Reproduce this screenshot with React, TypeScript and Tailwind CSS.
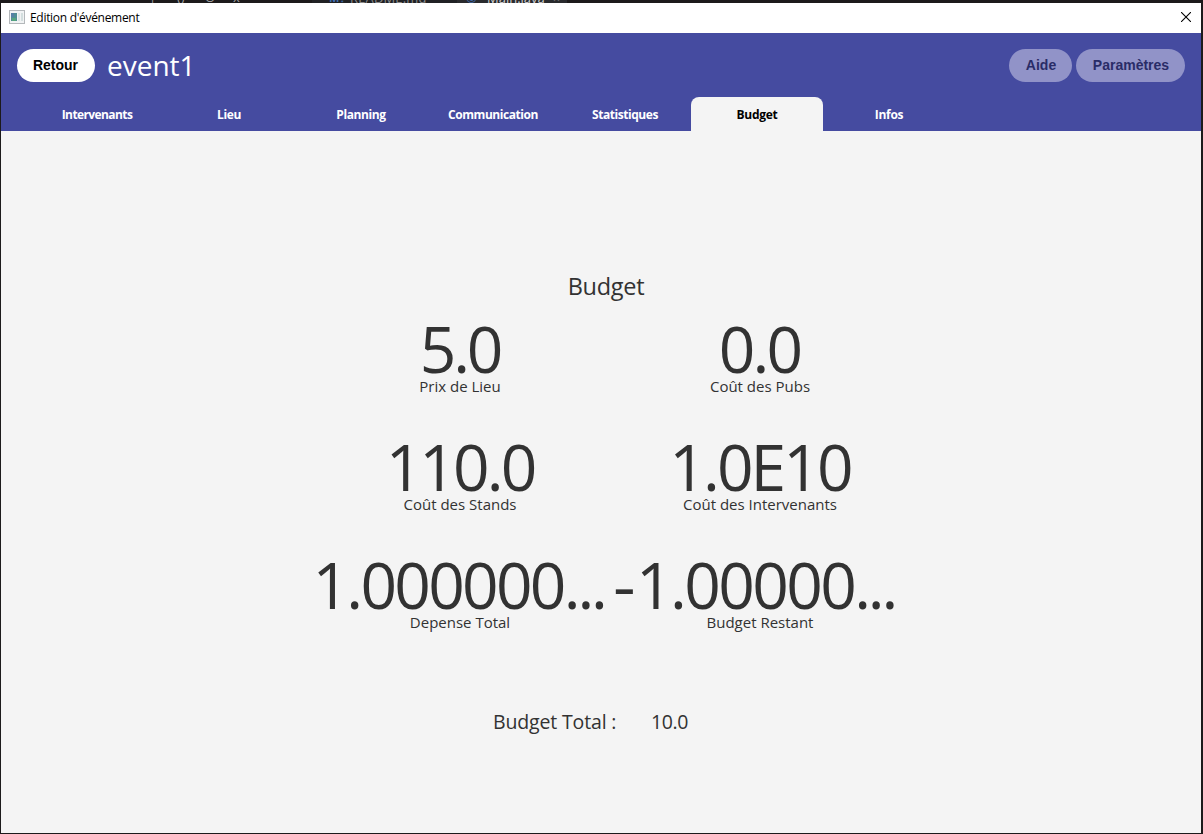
import { useState } from 'react';

interface Tab {
    label: string;
    spacing: string;
}

interface Figure {
    value: string;
    negative?: boolean;
    truncated?: boolean;
    label: string;
    valueClass: string;
}

const tabs: Tab[] = [
    { label: 'Intervenants', spacing: 'tracking-[-0.6px]' },
    { label: 'Lieu', spacing: 'tracking-[-0.4px]' },
    { label: 'Planning', spacing: 'tracking-[-0.4px]' },
    { label: 'Communication', spacing: 'tracking-[-0.45px]' },
    { label: 'Statistiques', spacing: 'tracking-[-0.45px]' },
    { label: 'Budget', spacing: 'tracking-[-0.3px]' },
    { label: 'Infos', spacing: 'tracking-[-0.3px]' },
];

const figures: Figure[] = [
    { value: '5.0', label: 'Prix de Lieu', valueClass: 'tracking-[-3.2px]' },
    { value: '0.0', label: 'Coût des Pubs', valueClass: 'tracking-[-2.9px] pr-px' },
    { value: '110.0', label: 'Coût des Stands', valueClass: 'tracking-[-2.9px]' },
    { value: '1.0E10', label: 'Coût des Intervenants', valueClass: 'tracking-[-2.9px]' },
    { value: '1.000000', truncated: true, label: 'Depense Total', valueClass: 'tracking-[-2.7px] pr-[3px]' },
    { value: '1.00000', negative: true, truncated: true, label: 'Budget Restant', valueClass: 'tracking-[-2.6px] pr-[11px]' },
];

function WindowIcon() {
    return (
        <svg className="mb-[2px]" width="16" height="14" viewBox="0 0 16 14" shapeRendering="crispEdges">
            <rect x="0.5" y="0.5" width="15" height="13" fill="#f1f3f4" stroke="#b4b8bb" />
            <rect x="2" y="3" width="6" height="8" fill="#4f8e94" />
            <rect x="2" y="3" width="3" height="4" fill="#5580a5" />
            <rect x="3" y="8" width="4" height="3" fill="#56a57e" />
            <rect x="9" y="3" width="2" height="8" fill="#dbe5e5" />
            <rect x="12" y="3" width="2" height="8" fill="#d3dede" />
        </svg>
    );
}

// Bottom edge of the editor that sits behind the window
function EditorStrip() {
    return (
        <div className="flex h-[3px] shrink-0 overflow-hidden bg-[#1c1a1b] pl-[149px] text-[13px] leading-[18px]">
            <div className="-mt-[12px] flex h-[18px] w-[163px] shrink-0 text-[#a0a0a0]">
                <span className="w-[28px]">|</span>
                <span className="w-[28px]">{'()'}</span>
                <span className="w-[28px]">O</span>
                <span>x</span>
            </div>
            <div className="-mt-[11px] flex h-[18px] w-[145px] shrink-0 bg-[#202124] pl-[17px] tracking-[0.15px] text-[#8b8b8b]">
                <span className="mr-2 w-[13px] text-[11px] font-bold text-[#416daf]">M↓</span>README.md
            </div>
            <div className="-mt-[11px] flex h-[18px] w-[110px] shrink-0 bg-[#292a2d] pl-[9px] text-[#d0d0d0]">
                <span className="mr-2 w-[13px] text-[#416daf]">©</span>Main.java<span className="ml-2 text-[#777777]">×</span>
            </div>
        </div>
    );
}

function BudgetFigure({ value, negative, truncated, label, valueClass }: Figure) {
    return (
        <div className="flex h-[118px] flex-col items-center whitespace-nowrap">
            <div className={`h-[60px] text-[64px] leading-[66px] ${valueClass}`}>
                {negative && <span className="mr-[4px] inline-block scale-x-110">-</span>}
                {value}
                {truncated && <span className="tracking-[-3.2px]">...</span>}
            </div>
            <div className="text-[15px] leading-[20px]">{label}</div>
        </div>
    );
}

export default function App() {
    const [activeTab, setActiveTab] = useState('Budget');

    return (
        <div className="flex h-[834px] w-[1203px] flex-col overflow-hidden bg-[#1c1a1b] font-['Open_Sans','Noto_Sans',sans-serif] text-[#323232]">
            <EditorStrip />

            <div className="ml-px flex h-[830px] w-[1200px] flex-col bg-[#f4f4f4]">
                {/* Title bar */}
                <div className="flex h-[30px] shrink-0 items-center bg-white pl-2 pr-[10px] text-black">
                    <WindowIcon />
                    <span className="ml-[5px] text-[12px] leading-[18px] tracking-[-0.3px]">Edition d'événement</span>
                    <button className="mb-[2px] ml-auto" aria-label="Fermer">
                        <svg width="10" height="10" viewBox="0 0 10 10" fill="none" stroke="#000000" strokeWidth="1.1">
                            <path d="M0 0L10 10M10 0L0 10" />
                        </svg>
                    </button>
                </div>

                {/* Header */}
                <header className="h-[98px] shrink-0 bg-[#454ba0]">
                    <div className="flex h-[64px] items-center px-4 font-['Liberation_Sans',Arial,sans-serif] text-[14px] font-bold">
                        <button className="h-[33px] w-[78px] rounded-full bg-white pr-px text-black">Retour</button>
                        <h1 className="ml-3 font-['Open_Sans',sans-serif] text-[28px] leading-[36px] font-normal text-white">event1</h1>
                        <div className="ml-auto flex gap-1">
                            <button className="h-[33px] w-[63px] rounded-full bg-[#9193c8] pl-px text-[#292c67]">Aide</button>
                            <button className="h-[33px] w-[109px] rounded-full bg-[#9193c8] pl-px text-[#292c67]">Paramètres</button>
                        </div>
                    </div>
                    <nav className="flex h-[34px] pl-[30px]">
                        {tabs.map((tab) => (
                            <button
                                key={tab.label}
                                onClick={() => setActiveTab(tab.label)}
                                className={`h-[34px] w-[132px] rounded-t-lg pt-[2px] text-[12px] leading-[32px] font-bold ${tab.spacing} ${
                                    activeTab === tab.label ? 'bg-[#f4f4f4] text-black' : 'text-white'
                                }`}
                            >
                                {tab.label}
                            </button>
                        ))}
                    </nav>
                </header>

                {/* Budget */}
                <main className="flex flex-col items-center pt-[139px] pl-[18px]">
                    <h2 className="-ml-[8px] text-[23.5px] leading-[32px] tracking-[-0.3px]">Budget</h2>
                    <div className="mt-[14px] grid grid-cols-[300px_300px]">
                        {figures.map((figure) => (
                            <BudgetFigure key={figure.label} {...figure} />
                        ))}
                    </div>
                    <div className="mt-[38px] flex w-[600px] pl-[183px] text-[19.5px] leading-[28px] whitespace-nowrap">
                        <span className="w-[158px] tracking-[-0.15px]">Budget Total :</span>
                        <span className="tracking-[-0.4px]">10.0</span>
                    </div>
                </main>
            </div>
        </div>
    );
}
